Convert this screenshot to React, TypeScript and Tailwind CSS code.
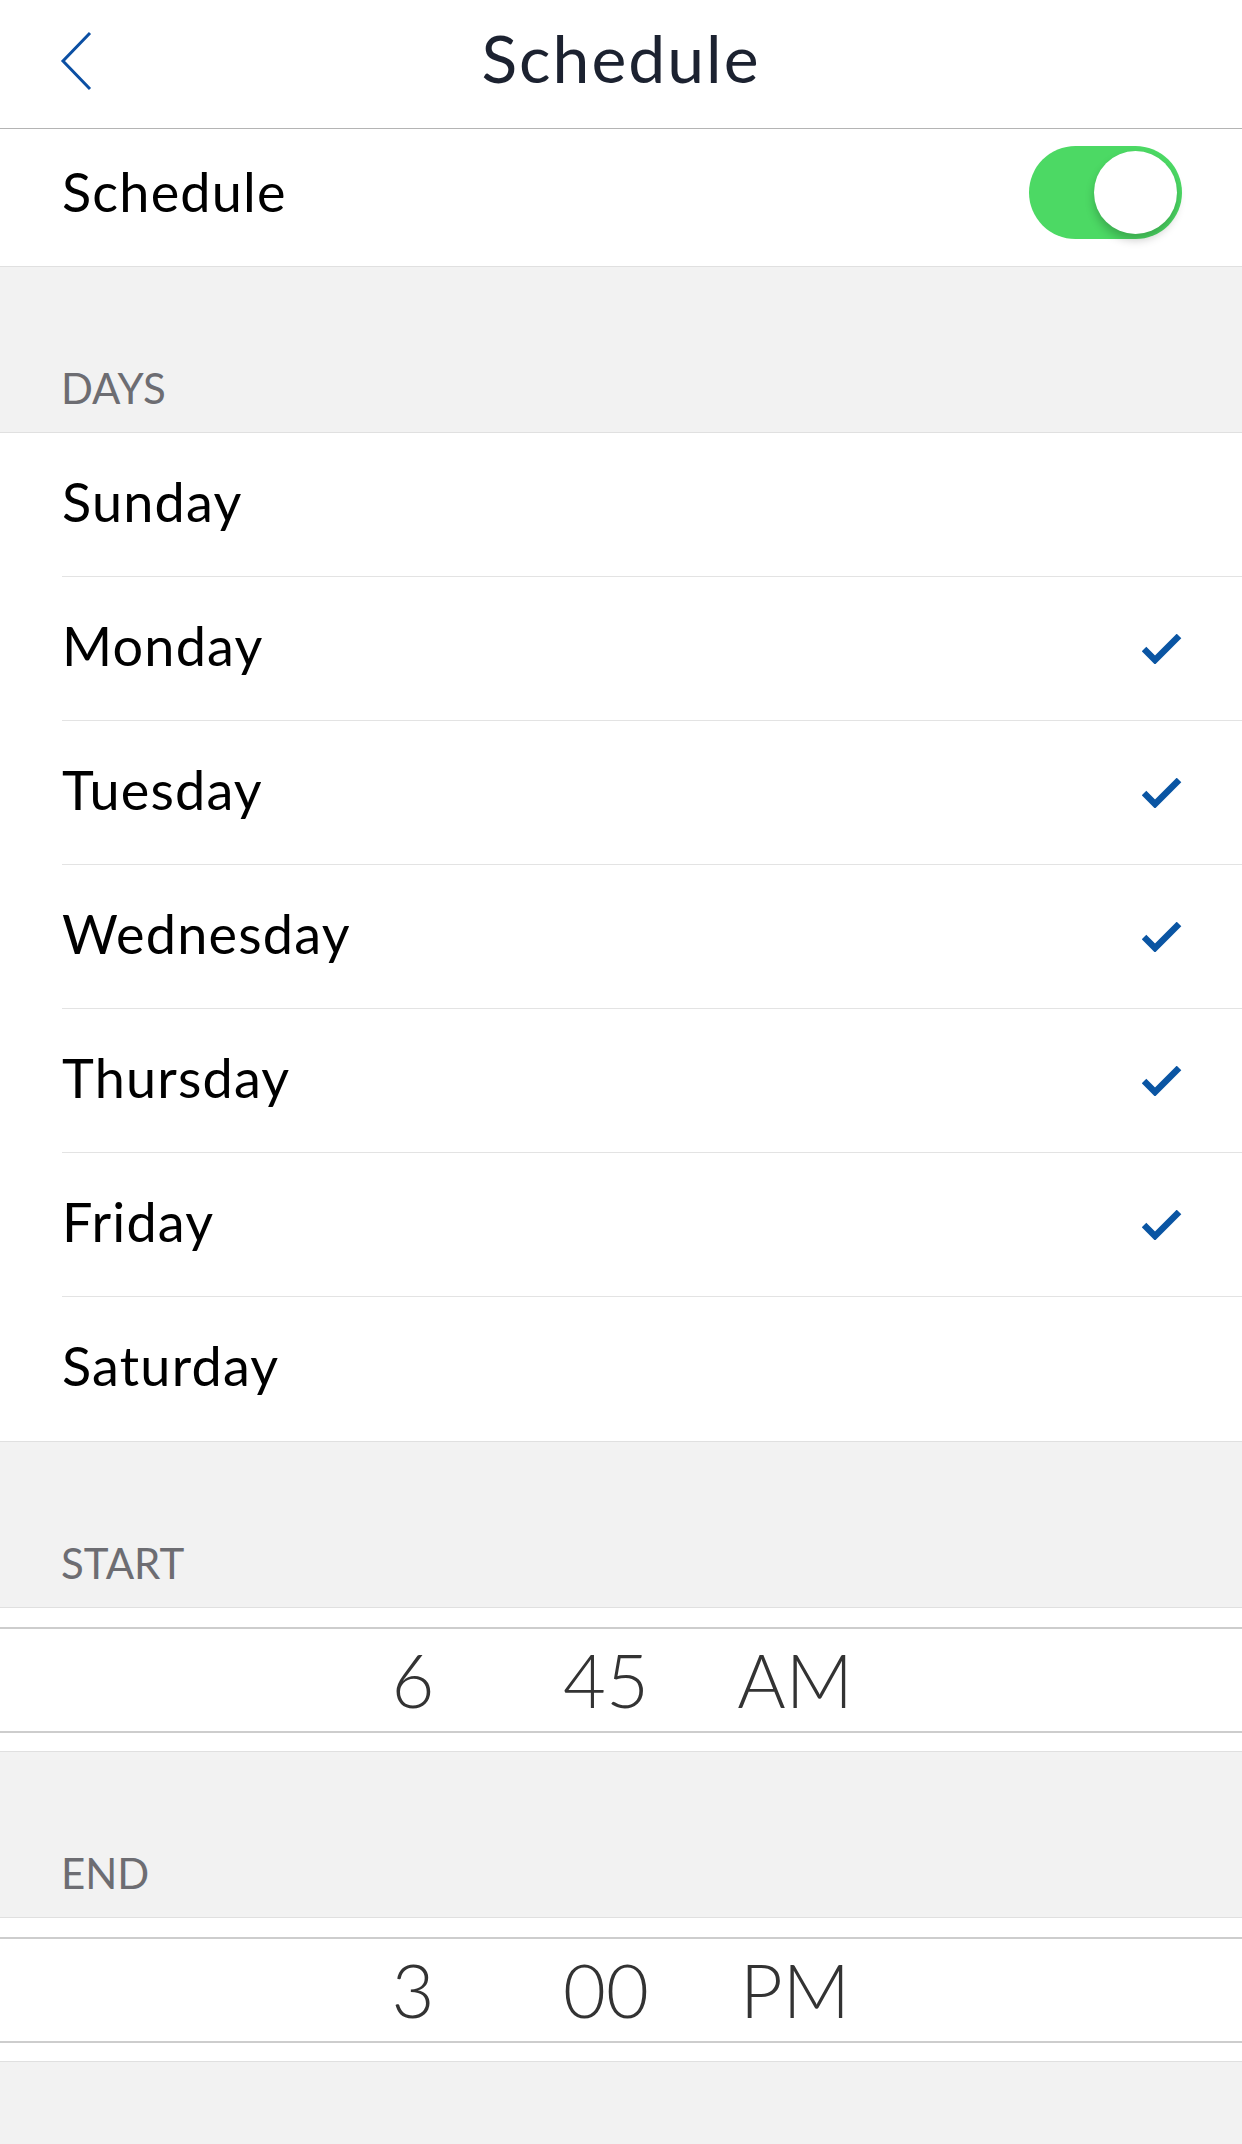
import React from "react";

const FONT = { fontFamily: "Lato, 'Noto Sans', sans-serif" };

function Check() {
  return (
    <svg width="40" height="30" viewBox="0 0 40 30" className="shrink-0 mr-[-2px]">
      <polyline points="2,15 13,26 37,2" fill="none" stroke="#0a55a3" strokeWidth="6.5" strokeLinejoin="miter" />
    </svg>
  );
}

function DayRow({ name, checked, last }: { name: string; checked: boolean; last?: boolean }) {
  return (
    <div className={last ? "border-b border-[#e0e0e0]" : ""}>
      <div className={"flex h-[144px] items-center ml-[62px] pr-[62px] " + (last ? "" : "border-b border-[#e3e3e3]")}>
        <span className="flex-1 text-[54px] text-black leading-none tracking-[1.2px] pb-[6px]">{name}</span>
        {checked && <Check />}
      </div>
    </div>
  );
}

function SectionHeader({ label }: { label: string }) {
  return (
    <div className="h-[166px] bg-[#f2f2f2] border-b border-[#e0e0e0] flex items-end pl-[61px] pb-[23px]">
      <span className="text-[42px] text-[#6d6d72] leading-none">{label}</span>
    </div>
  );
}

function Picker({ h, m, p }: { h: string; m: string; p: string }) {
  return (
    <div className="bg-white border-b border-[#e0e0e0]">
      <div className="h-[19px]" />
      <div className="h-[106px] border-y-2 border-[#cdcdcd] flex items-center">
        <div className="flex ml-[318px] text-[74px] leading-none text-[#333333] font-light">
          <span className="w-[190px] text-center">{h}</span>
          <span className="w-[190px] text-center pl-[6px]">{m}</span>
          <span className="w-[190px] text-center pl-[4px]">{p}</span>
        </div>
      </div>
      <div className="h-[18px]" />
    </div>
  );
}

export default function App() {
  const days: [string, boolean][] = [
    ["Sunday", false],
    ["Monday", true],
    ["Tuesday", true],
    ["Wednesday", true],
    ["Thursday", true],
    ["Friday", true],
    ["Saturday", false],
  ];
  return (
    <div style={FONT} className="w-[1242px] min-h-[2144px] bg-[#f2f2f2]">
      <div className="h-[129px] bg-white border-b border-[#b4b4b4] flex items-center relative">
        <svg width="34" height="60" viewBox="0 0 34 60" className="absolute left-[60px] top-[31px]">
          <polyline points="30,2 3,30 30,58" fill="none" stroke="#0b4fa3" strokeWidth="3" />
        </svg>
        <div className="flex-1 text-center text-[66px] text-[#1c2230] leading-none pb-[12px] tracking-[2px]">Schedule</div>
      </div>
      <div className="h-[138px] bg-white border-b border-[#e0e0e0] flex items-center pl-[62px] pr-[60px]">
        <span className="flex-1 text-[54px] text-black leading-none tracking-[1.2px] pb-[12px]">Schedule</span>
        <div className="w-[153px] h-[93px] rounded-full bg-[#4cd964] relative mb-[10px]">
          <div className="absolute right-[5px] top-[5px] w-[83px] h-[83px] rounded-full bg-white shadow-[0_6px_10px_rgba(0,0,0,0.22)]" />
        </div>
      </div>
      <SectionHeader label="DAYS" />
      <div className="bg-white">
        {days.map(([n, c], i) => (
          <DayRow key={n} name={n} checked={c} last={i === days.length - 1} />
        ))}
      </div>
      <SectionHeader label="START" />
      <Picker h="6" m="45" p="AM" />
      <SectionHeader label="END" />
      <Picker h="3" m="00" p="PM" />
    </div>
  );
}
